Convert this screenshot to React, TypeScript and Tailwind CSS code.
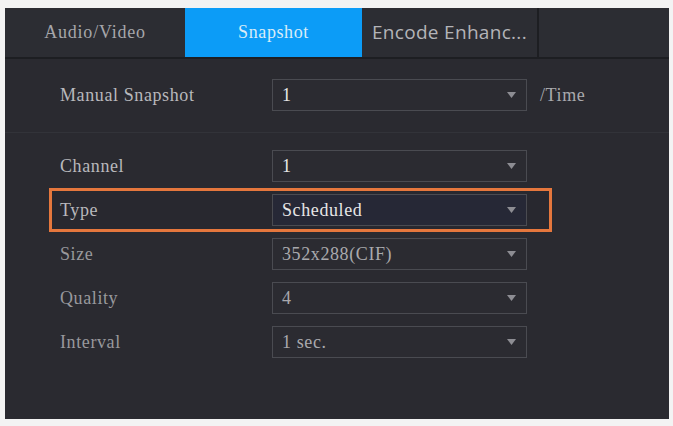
import React from "react";

const serif = { fontFamily: '"Liberation Serif", "Times New Roman", serif' };

function Arrow() {
  return (
    <svg width="9" height="6" viewBox="0 0 9 6" className="absolute right-[10px] top-1/2 -translate-y-1/2">
      <path d="M0 0 L9 0 L4.5 6 Z" fill="#8d8d93" />
    </svg>
  );
}

function Select({ value, bright, dark }: { value: string; bright?: boolean; dark?: boolean }) {
  return (
    <div
      className={`relative w-[255px] h-[32px] border border-[#4a4b51] flex items-center pl-[9px] ${dark ? "bg-[#262836]" : "bg-[#2b2b31]"}`}
    >
      <span
        className={`text-[18px] tracking-[0.6px] leading-none ${bright ? "text-[#e6e6e6]" : "text-[#a9a9ad]"}`}
        style={serif}
      >
        {value}
      </span>
      <Arrow />
    </div>
  );
}

function Row({
  label,
  value,
  highlight,
  bright,
  dimLabel,
}: {
  label: string;
  value: string;
  highlight?: boolean;
  bright?: boolean;
  dimLabel?: boolean;
}) {
  return (
    <div
      className={`ml-[44px] w-[503px] h-[44px] flex items-center ${
        highlight ? "border-[3px] pl-[8px] border-[#e5773d] bg-[#28282f]" : "border-2 pl-[9px] border-transparent"
      }`}
    >
      <span
        className={`w-[212px] text-[18px] tracking-[0.6px] leading-none ${dimLabel ? "text-[#98989c]" : "text-[#b8b8bc]"}`}
        style={serif}
      >
        {label}
      </span>
      <Select value={value} bright={bright} dark={highlight} />
    </div>
  );
}

export default function App() {
  return (
    <div className="w-[673px] h-[426px] bg-[#f3f3f3] pt-[8px] pl-[5px] overflow-hidden">
      <div className="w-[664px] h-[411px] bg-[#2a2a30] flex flex-col">
        <div className="h-[51px] flex bg-[#2c2d33] border-b-2 border-[#1d1e22]">
          <div className="w-[180px] flex items-center justify-center">
            <span className="text-[18px] tracking-[0.8px] text-[#a6a6aa]" style={serif}>
              Audio/Video
            </span>
          </div>
          <div className="w-[177px] flex items-center justify-center bg-[#0c9cf7]">
            <span className="text-[18px] tracking-[0.6px] text-[#d9ecf8]" style={serif}>
              Snapshot
            </span>
          </div>
          <div className="w-[177px] flex items-center pl-[10px] border-r-2 border-[#1d1e22]">
            <span
              className="text-[19px] tracking-[0.3px] text-[#b4b4b8]"
              style={{ fontFamily: '"Open Sans", "Noto Sans", sans-serif' }}
            >
              Encode Enhanc...
            </span>
          </div>
          <div className="flex-1" />
        </div>

        <div className="mt-[14px] ml-[44px] h-[44px] flex items-center pl-[11px]">
          <span className="w-[212px] text-[18px] tracking-[0.6px] leading-none text-[#b8b8bc]" style={serif}>
            Manual Snapshot
          </span>
          <Select value="1" bright />
          <span className="ml-[13px] text-[18px] tracking-[0.6px] leading-none text-[#a9a9ad]" style={serif}>
            /Time
          </span>
        </div>

        <div className="mt-[15px] h-px bg-[#323339]" />

        <div className="mt-[11px] flex flex-col">
          <Row label="Channel" value="1" bright />
          <Row label="Type" value="Scheduled" highlight bright />
          <Row label="Size" value="352x288(CIF)" dimLabel />
          <Row label="Quality" value="4" dimLabel />
          <Row label="Interval" value="1 sec." dimLabel />
        </div>
      </div>
    </div>
  );
}
